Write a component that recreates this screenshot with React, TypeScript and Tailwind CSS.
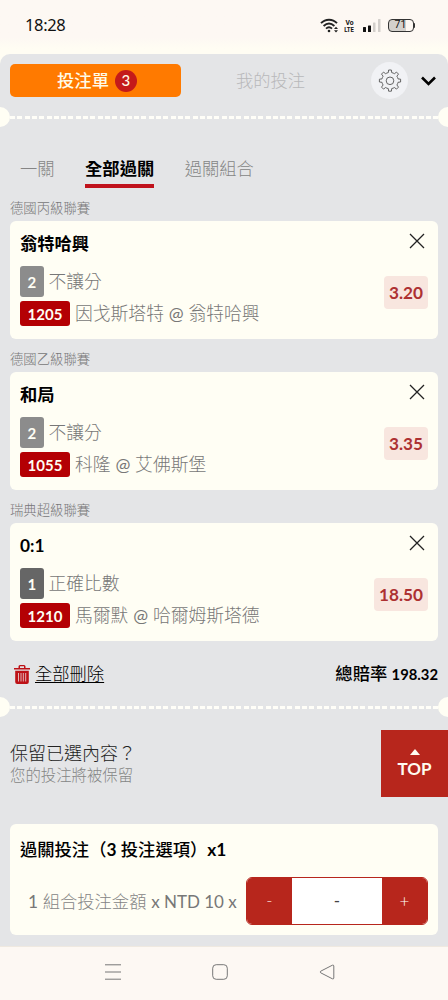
import type { ReactNode } from 'react'

type Bet = {
  league: string
  pick: string
  count: string
  badgeColor: string
  market: string
  code: string
  home: string
  away: string
  odds: string
}

const bets: Bet[] = [
  {
    league: '德國丙級聯賽',
    pick: '翁特哈興',
    count: '2',
    badgeColor: 'bg-[#8c8c8c]',
    market: '不讓分',
    code: '1205',
    home: '因戈斯塔特',
    away: '翁特哈興',
    odds: '3.20',
  },
  {
    league: '德國乙級聯賽',
    pick: '和局',
    count: '2',
    badgeColor: 'bg-[#8c8c8c]',
    market: '不讓分',
    code: '1055',
    home: '科隆',
    away: '艾佛斯堡',
    odds: '3.35',
  },
  {
    league: '瑞典超級聯賽',
    pick: '0:1',
    count: '1',
    badgeColor: 'bg-[#666666]',
    market: '正確比數',
    code: '1210',
    home: '馬爾默',
    away: '哈爾姆斯塔德',
    odds: '18.50',
  },
]

function StatusBar() {
  return (
    <div className="flex h-[54px] shrink-0 items-center justify-between bg-linear-to-b from-[#fdf8f3] from-70% to-[#fffdf3] to-90% pr-[33px] pl-[25px] text-[#111]">
      <span className="mt-[-3px] font-['Noto_Sans',sans-serif] text-[16.500px] tracking-[-0.35px]">18:28</span>
      <div className="mt-[-3px] flex items-center">
        <svg className="mr-[6px]" width="19" height="15" viewBox="0 0 19 15" fill="none" stroke="#222" strokeWidth="1.9">
          <path d="M1 5.2C5.5.5 12.500.5 17 5.200" />
          <path d="M3.600 8C7 4.700 11 4.700 14.400 8" />
          <path d="M6 10.600C8 8.900 10 8.900 12 10.600" />
          <circle cx="9" cy="13" r="1.300" fill="#222" stroke="none" />
          <path d="m14 11 2-2.200 2 2.200zM14 12.200l2 2.200 2-2.200z" fill="#222" stroke="none" />
        </svg>
        <div className="mr-[8px] flex w-[10px] flex-col items-center font-['Roboto',sans-serif] text-[7.500px] leading-[7px] font-bold">
          <span className="h-[7px] scale-x-90">Vo</span>
          <span className="h-[7px] scale-x-80">LTE</span>
        </div>
        <svg className="mr-[7px]" width="18" height="13" viewBox="0 0 18 13">
          <rect x="0" y="8" width="3" height="5" rx=".5" fill="#111" />
          <rect x="5" y="6.500" width="3" height="6.500" rx=".5" fill="#111" />
          <rect x="10" y="3.500" width="2.500" height="9.500" rx=".5" fill="#d3cfcb" />
          <rect x="15" y="0" width="2.500" height="13" rx=".5" fill="#d3cfcb" />
        </svg>
        <div className="flex items-center">
          <div className="flex h-[13px] w-[26px] items-center justify-center rounded-[4px] border border-[#333] bg-linear-to-r from-[#d3d0cc] from-70% to-[#fdf8f3] to-70% font-['Roboto',sans-serif] text-[10.500px] leading-none">
            71
          </div>
          <div className="h-[5px] w-[1.500px] rounded-r bg-[#333]" />
        </div>
      </div>
    </div>
  )
}

function GearIcon() {
  return (
    <svg width="24" height="24" viewBox="0 0 24 24" fill="none" stroke="#555" strokeWidth="0.9" strokeLinejoin="round">
      <path d="M10.300 3.600 10.600 1h2.800l.3 2.600c1 .2 1.900.6 2.700 1.100l2.100-1.600 2 2-1.600 2.100c.5.8.9 1.700 1.100 2.700l2.600.3v2.800l-2.600.3c-.2 1-.6 1.900-1.100 2.700l1.600 2.100-2 2-2.100-1.600c-.8.5-1.700.9-2.700 1.100l-.3 2.600h-2.800l-.3-2.600c-1-.2-1.900-.6-2.700-1.100l-2.100 1.600-2-2 1.600-2.100c-.5-.8-.9-1.700-1.100-2.700L1.400 13v-2.800l2.600-.3c.2-1 .6-1.900 1.100-2.700L3.500 5.100l2-2 2.100 1.600c.8-.5 1.700-.9 2.700-1.100z" />
      <circle cx="12" cy="11.800" r="3.800" />
    </svg>
  )
}

function Perforation() {
  return (
    <div className="flex h-5 shrink-0 items-center justify-between overflow-hidden">
      <span className="-ml-[10px] size-5 shrink-0 rounded-full bg-[#fffef4]" />
      <span className="h-[3px] flex-1 bg-[repeating-linear-gradient(90deg,#fffef8_0_5px,transparent_5px_7.300px)]" />
      <span className="-mr-[10px] size-5 shrink-0 rounded-full bg-[#fffef4]" />
    </div>
  )
}

function Tab({ children, active = false }: { children: ReactNode; active?: boolean }) {
  return (
    <span
      className={
        active
          ? 'border-b-4 border-[#c0121c] font-bold text-black'
          : 'border-b-4 border-transparent font-light text-[#858585]'
      }
    >
      {children}
    </span>
  )
}

function BetCard({ bet }: { bet: Bet }) {
  return (
    <section>
      <h3 className="flex h-[33px] items-center pt-[7px] text-[13.350px] font-light text-[#777]">{bet.league}</h3>
      <div className="flex h-[118px] justify-between rounded-md bg-[#fffef4] px-[10px]">
        <div className="pt-[10px]">
          <p className="h-[25px] text-[17.300px] leading-[25px] font-bold text-black">{bet.pick}</p>
          <div className="mt-[10px] flex items-center">
            <span
              className={`flex h-[31px] w-[23.500px] items-center justify-center rounded-[3px] pt-px text-[15px] font-bold text-[#fffef4] ${bet.badgeColor}`}
            >
              {bet.count}
            </span>
            <span className="-mt-px ml-[5px] text-[17.800px] leading-6 font-light text-[#777]">{bet.market}</span>
          </div>
          <div className="mt-1 flex items-center">
            <span className="flex h-[25px] w-[50px] items-center justify-center rounded-[3px] bg-[#b40004] pt-px text-[15px] font-bold text-[#fffef4]">
              {bet.code}
            </span>
            <span className="-mt-px ml-[5px] text-[17.800px] leading-6 font-light whitespace-pre text-[#777]">
              {bet.home} <span className="font-normal">@</span> {bet.away}
            </span>
          </div>
        </div>
        <div className="flex flex-col items-end">
          <svg className="mt-[12px] mr-[3px]" width="16" height="16" viewBox="0 0 16 16" stroke="#222" strokeWidth="1.300">
            <path d="m1 1 14 14M15 1 1 15" />
          </svg>
          <span className="mt-[27px] flex h-[33px] items-center rounded bg-[#f8e6df] px-[5px] text-[17.200px] font-bold text-[#ad3132]">
            {bet.odds}
          </span>
        </div>
      </div>
    </section>
  )
}

function NavBar() {
  return (
    <div className="flex h-[54px] shrink-0 items-center justify-center gap-[91px] border-t border-[#efe9e0] bg-[#fdf8f3] pr-[8px] pb-[3px]">
      <svg width="16" height="16" viewBox="0 0 16 16" stroke="#777" strokeWidth="1">
        <path d="M0 .8h16M0 8h16M0 15.200h16" />
      </svg>
      <svg width="16" height="16" viewBox="0 0 16 16" fill="none" stroke="#777">
        <rect x=".7" y=".7" width="14.600" height="14.600" rx="3.500" />
      </svg>
      <svg width="16" height="16" viewBox="0 0 16 16" fill="none" stroke="#777" strokeLinejoin="round">
        <path d="M13.400 1.200 1.700 7.200q-1.200.8 0 1.600l11.700 6q1.400.4 1.400-.8V2q0-1.200-1.400-.8z" />
      </svg>
    </div>
  )
}

export default function App() {
  return (
    <div className="flex h-[1000px] w-[448px] flex-col overflow-hidden bg-[#fffdf3] font-['Lato','Noto_Sans_CJK_TC',sans-serif]">
      <StatusBar />
      <main className="flex h-[892px] flex-col rounded-t-[10px] bg-[#e4e5e7]">
        <header className="flex h-[53px] shrink-0 items-center pl-[10px]">
          <div className="flex h-[33px] w-[171px] items-center justify-center gap-[6px] rounded-[5px] bg-[#ff7a00] pl-[3px] text-[17.300px] font-medium text-[#fffbe8]">
            投注單
            <span className="flex size-[22px] items-center justify-center rounded-full bg-[#c41a1a] text-[15px]">3</span>
          </div>
          <div className="w-[179px] text-center text-[17.300px] font-light text-[#b8b8ba]">我的投注</div>
          <div className="ml-[11px] flex size-[37px] items-center justify-center rounded-full bg-[#f1f2f5]">
            <GearIcon />
          </div>
          <svg className="ml-[13px]" width="15" height="10" viewBox="0 0 15 10" fill="none" stroke="#000" strokeWidth="2.600">
            <path d="m1 1.500 6.500 6.500L14 1.500" />
          </svg>
        </header>
        <Perforation />
        <div className="px-[10px]">
          <nav className="mt-[26px] flex h-[35px] gap-[30.500px] pl-[10px] text-[17.300px] leading-[31px]">
            <Tab>一關</Tab>
            <Tab active>全部過關</Tab>
            <Tab>過關組合</Tab>
          </nav>
          <div>
            {bets.map((bet) => (
              <BetCard key={bet.code} bet={bet} />
            ))}
          </div>
          <div className="flex h-[56px] items-center justify-between pt-[10px]">
            <div className="flex items-center gap-[5px] pl-[4px]">
              <svg width="16" height="19" viewBox="0 0 16 19" fill="#bd1116">
                <path d="M0 3h4.500V1.500Q4.500 0 6 0h4q1.500 0 1.500 1.500V3H16v1.600H0zM6 3h4V1.300H6z" fillRule="evenodd" />
                <path d="M1.200 5.800h13.600V17q0 2-2 2H3.200q-2 0-2-2z" />
                <path d="M4.500 8v8.500M7 8v8.500M9.300 8v8.500M11.700 8v8.500" stroke="#e4c9c9" strokeWidth=".9" />
              </svg>
              <span className="text-[17.300px] font-light text-black underline decoration-1 underline-offset-[2px]">全部刪除</span>
            </div>
            <span className="text-[17.300px] font-medium text-black">
              總賠率 <span className="text-[14.800px] font-bold">198.32</span>
            </span>
          </div>
        </div>
        <Perforation />
        <div className="mt-[13px] flex h-[67px] shrink-0 justify-between pl-[10px]">
          <div className="pt-[11px] font-light">
            <p className="text-[18px] leading-[24px] text-[#222]">保留已選內容？</p>
            <p className="text-[15.400px] leading-[20px] text-[#858585]">您的投注將被保留</p>
          </div>
          <div className="flex w-[67px] flex-col items-center bg-[#b7261c] pt-[19px] text-[#fffbf0]">
            <svg width="10" height="6" viewBox="0 0 10 6" fill="currentColor">
              <path d="m0 6 5-6 5 6z" />
            </svg>
            <span className="mt-[2px] text-[17px] leading-6 font-bold">TOP</span>
          </div>
        </div>
        <section className="mx-[10px] mt-[27px] h-[111px] shrink-0 rounded-md bg-[#fffef4] px-[10px] pt-[13px]">
          <h2 className="text-[17.300px] leading-[26px] font-medium whitespace-pre text-black">
            過關投注（<span className="font-bold">3</span> 投注選項）<span className="font-bold">x1</span>
          </h2>
          <div className="mt-[14px] flex items-center justify-between">
            <span className="pt-px pl-[8px] text-[17.300px] font-light whitespace-pre text-[#858585]">
              <span className="font-normal text-[#777]">1</span> 組合投注金額{' '}
              <span className="text-[17px] font-normal text-[#777]">x NTD 10 x</span>
            </span>
            <div className="flex h-[48px] w-[182px] overflow-hidden rounded-md border border-[#b7261c] bg-white">
              <button className="w-[45px] bg-[#b7261c] text-[17px] font-light text-[#f8dcd4]">-</button>
              <span className="flex flex-1 items-center justify-center text-[17px] text-[#444]">-</span>
              <button className="w-[45px] bg-[#b7261c] text-[17px] font-light text-white">+</button>
            </div>
          </div>
        </section>
      </main>
      <NavBar />
    </div>
  )
}
